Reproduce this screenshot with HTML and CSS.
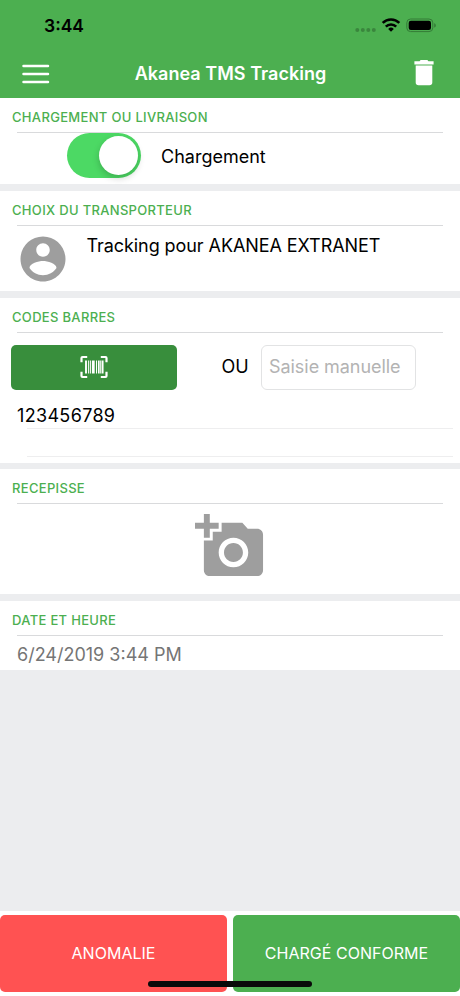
FILE: index.html
```html
<!DOCTYPE html>
<html lang="fr">
<head>
<meta charset="utf-8">
<title>Akanea TMS Tracking</title>
<link rel="stylesheet" href="styles.css">
</head>
<body>
<div class="app">
  <header class="header">
    <div class="status">
      <span class="time">3:44</span>
      <svg class="status-icons" width="82" height="20" viewBox="0 0 82 20">
        <g fill="#3a863d"><circle cx="3.3" cy="14" r="2"/><circle cx="8.8" cy="14" r="2"/><circle cx="14.3" cy="14" r="2"/><circle cx="19.8" cy="14" r="2"/></g>
        <g fill="none" stroke="#000" stroke-width="2.6"><path d="M28.700 6.900a11.800 11.800 0 0 1 16.600 0"/><path d="M31.800 10.600a7.400 7.400 0 0 1 10.400 0"/></g>
        <path d="M34.2 12.900a4.100 4.100 0 0 1 5.600 0L37 15.800z"/>
        <rect x="52.8" y="3" width="26" height="12.6" rx="3.8" fill="none" stroke="#347b37"/>
        <rect x="54.7" y="4.8" width="22.3" height="9.1" rx="2.2"/>
        <path d="M80.2 7.2c2.2.7 2.2 3.7 0 4.4z" fill="#347b37"/>
      </svg>
    </div>
    <div class="toolbar">
      <svg class="menu" width="28" height="20" viewBox="0 0 28 20" stroke="#fff" stroke-width="2.5" stroke-linecap="round"><path d="M1.500 2h24.500M1.500 10h24.500M1.500 18h24.500"/></svg>
      <h1 class="title">Akanea TMS Tracking</h1>
      <svg class="trash" width="20" height="26" viewBox="0 0 20 26" fill="#fff"><path d="M.4 1.300h5.200L6.600 0h6.800l1 1.300h5.200v3.100H.4zM1.700 5.600h16.600V22.400c0 1.700-1.100 2.800-2.800 2.800h-11c-1.700 0-2.800-1.100-2.800-2.800z"/></svg>
    </div>
  </header>

  <main class="content">
    <section class="card card-mode">
      <h2 class="label">CHARGEMENT OU LIVRAISON</h2>
      <div class="mode-row">
        <span class="switch"><span class="knob"></span></span>
        <span class="mode-text">Chargement</span>
      </div>
    </section>
    <section class="card card-carrier">
      <h2 class="label">CHOIX DU TRANSPORTEUR</h2>
      <div class="carrier-row">
        <svg class="avatar" width="54" height="54" viewBox="0 0 24 24" fill="#9e9e9e"><path d="M12 2C6.480 2 2 6.480 2 12s4.480 10 10 10 10-4.480 10-10S17.520 2 12 2zm0 3c1.660 0 3 1.340 3 3s-1.340 3-3 3-3-1.340-3-3 1.340-3 3-3zm0 14.200c-2.500 0-4.710-1.280-6-3.220.03-1.990 4-3.080 6-3.080 1.990 0 5.970 1.090 6 3.080-1.290 1.940-3.500 3.220-6 3.220z"/></svg>
        <span class="carrier-text">Tracking pour AKANEA EXTRANET</span>
      </div>
    </section>
    <section class="card card-codes">
      <h2 class="label">CODES BARRES</h2>
      <div class="scan-row">
        <button class="scan" aria-label="Scanner">
          <svg width="28" height="24" viewBox="0 0 28 24" fill="none" stroke="#fff"><path stroke-width="2.200" stroke-linejoin="round" d="M1.500 7.200V3q0-1 1-1h4.700M20.800 2h4.700q1 0 1 1v4.200M1.500 16.800V21q0 1 1 1h4.700M20.800 22h4.700q1 0 1-1v-4.200"/><path stroke-width="1.900" d="M6 5.500v13M22.600 5.500v13"/><path stroke-width="1" d="M8.600 5.500v13M10.400 5.500v13M16.500 5.500v13M20.700 5.500v13"/><path stroke-width="2.800" d="M13.300 5.500v13"/><path stroke-width="1.700" d="M18.800 5.500v13"/></svg>
        </button>
        <span class="or">OU</span>
        <div class="field"><span class="placeholder">Saisie manuelle</span></div>
      </div>
      <div class="code"><span class="code-text">123456789</span></div>
      <div class="code code-empty"></div>
    </section>
    <section class="card card-receipt">
      <h2 class="label">RECEPISSE</h2>
      <svg class="camera" width="71" height="71" viewBox="0 0 24 24" fill="#9e9e9e"><path d="M3 4V1h2v3h3v2H5v3H3V6H0V4h3zm3 6V7h3V4h7l1.830 2H21c1.100 0 2 .9 2 2v12c0 1.100-.9 2-2 2H5c-1.100 0-2-.9-2-2V10h3zm7 9c2.760 0 5-2.240 5-5s-2.240-5-5-5-5 2.240-5 5 2.240 5 5 5zm-3.200-5c0 1.770 1.430 3.200 3.200 3.200s3.200-1.430 3.200-3.200-1.430-3.200-3.200-3.200-3.200 1.430-3.200 3.200z"/></svg>
    </section>
    <section class="card card-date">
      <h2 class="label">DATE ET HEURE</h2>
      <div class="date-row"><span class="date">6/24/2019 3:44 PM</span></div>
    </section>
  </main>

  <footer class="footer">
    <button class="action danger">ANOMALIE</button>
    <button class="action success">CHARGÉ CONFORME</button>
    <span class="home-bar"></span>
  </footer>
</div>
</body>
</html>
```
FILE: styles.css
```css
* { box-sizing: border-box; }
body { margin: 0; font-family: Inter, "Liberation Sans", sans-serif; color: #000; }
button { border: 0; padding: 0; font: inherit; color: #fff; }
h1, h2 { margin: 0; }
svg { display: block; flex: none; }
.app { width: 460px; height: 996px; display: flex; flex-direction: column; overflow: hidden; background: #ecedef; white-space: nowrap; }

.header { height: 98px; background: #4caf50; flex: none; }
.status { height: 50px; padding: 15px 24px 0 44px; display: flex; justify-content: space-between; }
.time { font-size: 17.5px; font-weight: 600; line-height: 21px; }
.status-icons { margin-top: 1px; }
.toolbar { height: 47px; padding: 0 26px 0 22px; display: flex; align-items: center; justify-content: space-between; color: #fff; }
.title { font-size: 18px; font-weight: 600; line-height: 24px; margin: 1px 3px 0 0; letter-spacing: 0.03px; }
.trash { margin-top: -1px; }

.content { flex: 1; display: flex; flex-direction: column; gap: 6.5px; }
.card { background: #fff; flex: none; }
.label { height: 35px; margin: 0 17px 0 12px; padding-top: 11px; font-size: 13px; line-height: 17px; font-weight: 500; letter-spacing: 0.32px; color: #4caf50; background: linear-gradient(#d9dadc, #d9dadc) 5px 100% / 100% 1px no-repeat; }
.card-mode { height: 86px; }
.mode-row { display: flex; align-items: center; height: 48px; padding-left: 67px; gap: 20px; }
.switch { width: 74px; height: 45px; margin-top: -3px; border-radius: 23px; background: #4cd964; padding: 3px; display: flex; justify-content: flex-end; }
.knob { width: 39px; height: 39px; border-radius: 50%; background: #fff; box-shadow: 0 3px 7px rgba(0,0,0,.2); }
.mode-text, .carrier-text, .or, .code-text, .placeholder, .date { font-size: 18px; line-height: 24px; }
.card-carrier { height: 100.5px; }
.carrier-row { display: flex; padding: 6px 0 0 15.5px; gap: 17px; }
.carrier-text { margin-top: 2px; letter-spacing: -0.07px; }
.card-codes { height: 165px; }
.scan-row { display: flex; align-items: center; padding: 12px 0 0 11px; }
.scan { width: 166px; height: 45px; border-radius: 5px; background: #388e3c; display: flex; align-items: center; justify-content: center; }
.or { width: 84px; padding-left: 44.5px; }
.field { width: 155px; height: 45px; border: 1px solid #e2e3e4; border-radius: 6px; display: flex; align-items: center; padding-left: 7px; }
.placeholder { color: #b3b3b3; letter-spacing: -0.05px; }
.code { height: 39px; margin: 0 7px 0 17px; padding-top: 14px; background: linear-gradient(#eeeeef, #eeeeef) 10px 100% / 100% 1px no-repeat; }
.code-text { letter-spacing: 0.33px; }
.code-empty { height: 28px; }
.card-receipt { height: 125px; }
.camera { margin: 7px 0 0 194.5px; }
.card-date { height: 69.5px; }
.date-row { padding: 7px 0 0 17px; }
.date { color: #757575; }

.footer { position: relative; height: 85px; flex: none; background: #fff; display: flex; gap: 6px; padding: 3.5px 0 4px; }
.action { flex: 1; border-radius: 5px; font-size: 16px; line-height: 20px; padding-bottom: 1px; letter-spacing: 0.03px; }
.danger { background: #ff5252; }
.success { background: #4caf50; }
.home-bar { position: absolute; left: 148px; bottom: 9px; width: 164px; height: 6px; border-radius: 3px; background: #0a0a0a; }
```
